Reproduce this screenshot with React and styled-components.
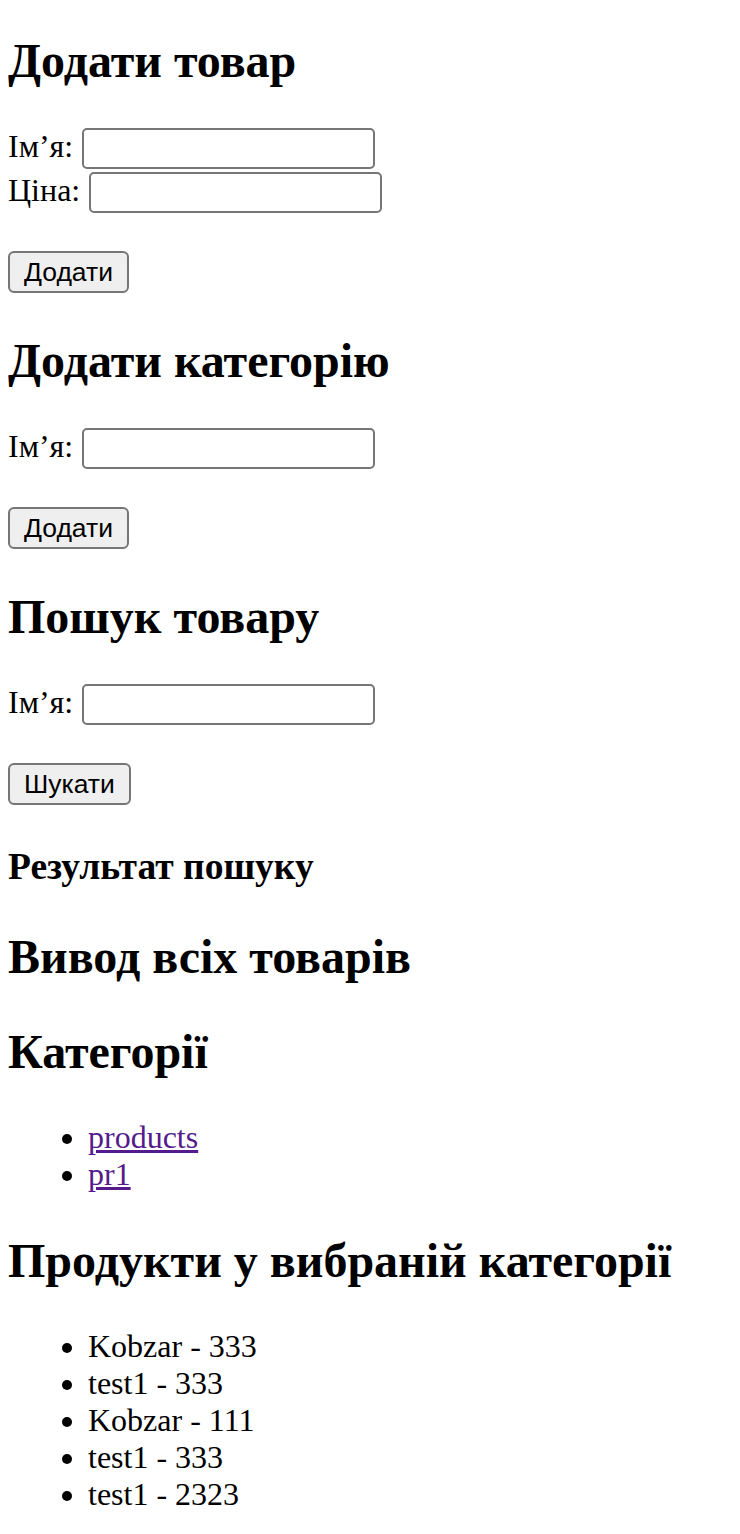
import styled, { createGlobalStyle } from 'styled-components'

const GlobalStyle = createGlobalStyle`
    body {
        margin: 0 8px 8px;
        background: #fff;
        color: #000;
        font-family: "Liberation Serif", "Times New Roman", serif;
        font-size: 32px;
    }
`

const Page = styled.div`
    display: block;
    padding-top: 1px;
`

const Titulo = styled.h2`
    font-size: 48px;
    font-weight: 700;
    line-height: 55px;
    margin: 40px 0;

    &:first-of-type {
        margin-top: 32px;
    }
`

const Subtitulo = styled.h3`
    font-size: 37.5px;
    font-weight: 700;
    line-height: 44px;
    margin: 40px 0 37px;
`

const Formulario = styled.form`
    display: flex;
    flex-direction: column;
    align-items: flex-start;
`

const Linha = styled.label`
    display: flex;
    align-items: flex-start;
    gap: 9px;
    height: 44px;
    line-height: 37px;
`

const Campo = styled.input`
    box-sizing: border-box;
    width: 293px;
    height: 41px;
    margin: 0;
    border: 2px solid #767676;
    border-radius: 5px;
    background: #fff;
    font-family: "Liberation Sans", Arial, sans-serif;
    font-size: 26px;
`

const Botao = styled.button`
    box-sizing: border-box;
    height: 42px;
    margin-top: 35px;
    padding: 0 14px;
    background-color: #efefef;
    color: #000;
    border: 2px solid #767676;
    border-radius: 6px;
    font-family: "Liberation Sans", Arial, sans-serif;
    font-size: 26.5px;
    cursor: pointer;
`

const Lista = styled.ul`
    margin: 0;
    padding-left: 80px;
    line-height: 37px;
    list-style: disc;
`

const Link = styled.a`
    color: #551a8b;
    text-decoration: underline;
`

const categorias = ['products', 'pr1']

const produtos = [
    { nome: 'Kobzar', preco: 333 },
    { nome: 'test1', preco: 333 },
    { nome: 'Kobzar', preco: 111 },
    { nome: 'test1', preco: 333 },
    { nome: 'test1', preco: 2323 },
]

function App() {
    return (
        <Page>
            <GlobalStyle />
            <Titulo>Додати товар</Titulo>
            <Formulario onSubmit={e => e.preventDefault()}>
                <Linha>Ім’я: <Campo type="text" /></Linha>
                <Linha>Ціна: <Campo type="text" /></Linha>
                <Botao type="submit">Додати</Botao>
            </Formulario>

            <Titulo>Додати категорію</Titulo>
            <Formulario onSubmit={e => e.preventDefault()}>
                <Linha>Ім’я: <Campo type="text" /></Linha>
                <Botao type="submit">Додати</Botao>
            </Formulario>

            <Titulo>Пошук товару</Titulo>
            <Formulario onSubmit={e => e.preventDefault()}>
                <Linha>Ім’я: <Campo type="text" /></Linha>
                <Botao type="submit">Шукати</Botao>
            </Formulario>

            <Subtitulo>Результат пошуку</Subtitulo>

            <Titulo>Вивод всіх товарів</Titulo>

            <Titulo>Категорії</Titulo>
            <Lista>
                {categorias.map(cat => (
                    <li key={cat}><Link href="#">{cat}</Link></li>
                ))}
            </Lista>

            <Titulo>Продукти у вибраній категорії</Titulo>
            <Lista>
                {produtos.map((p, i) => (
                    <li key={i}>{p.nome} - {p.preco}</li>
                ))}
            </Lista>
        </Page>
    )
}

export default App
